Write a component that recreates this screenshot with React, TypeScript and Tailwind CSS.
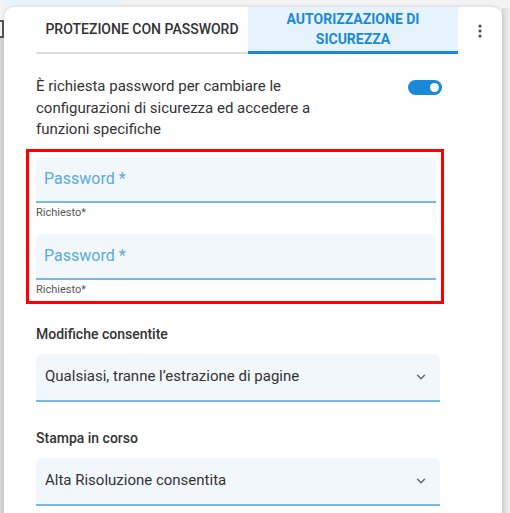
import { ChevronDown } from "lucide-react";

const font = { fontFamily: "Roboto, 'Noto Sans', sans-serif" };

function PasswordField() {
  return (
    <div>
      <div className="h-[46px] rounded-t-[6px] bg-[#f2f7fc] border-b-2 border-[#77b9e4] flex items-center px-2">
        <span className="text-[16px] text-[#5aa9df]">Password *</span>
      </div>
      <div className="text-[11px] text-[#555] leading-[14px] mt-[3px]">Richiesto*</div>
    </div>
  );
}

function SelectField({ label, value }: { label: string; value: string }) {
  return (
    <div className="w-[404px]">
      <div className="text-[14px] font-medium text-[#333] leading-[20px]">{label}</div>
      <div className="mt-[10px] h-[48px] rounded-t-[6px] bg-[#f2f7fc] border-b-2 border-[#77b9e4] flex items-center justify-between pl-[9px] pr-[12px]">
        <span className="text-[15px] text-[#333]">{value}</span>
        <ChevronDown size={14} strokeWidth={2.5} className="text-[#666]" />
      </div>
    </div>
  );
}

export default function App() {
  return (
    <div className="relative w-[510px] h-[513px] overflow-hidden bg-[#f3f3f3]" style={font}>
      {/* page behind */}
      <div className="absolute left-0 top-[-8px] w-[125px] h-[13px] rounded-b-lg bg-[#e8f3fc]" />
      <div className="absolute left-0 top-[20px] w-[4px] h-[18px] border-2 border-l-0 border-[#555]" />
      <div className="absolute left-0 top-[38px] w-[4px] h-[475px] bg-[#d6d6d6]" />
      <div className="absolute right-0 top-[8px] w-[8px] h-[505px] bg-gradient-to-r from-[#d8d8d8] to-[#f0f0f0]" />

      {/* dialog */}
      <div className="absolute left-[4px] top-[7px] w-[498px] h-[520px] bg-white rounded-t-[10px] shadow-[0_0_4px_rgba(0,0,0,0.15)]">
        <div className="flex items-stretch pl-[32px] h-[47px]">
          <div className="w-[212px] flex items-center justify-center border-b-2 border-[#ddd]">
            <span className="text-[14px] font-medium text-[#333] uppercase">Protezione con password</span>
          </div>
          <div className="w-[210px] bg-[#e6f3fd] border-b-[3px] border-[#1a8ad8] flex items-center justify-center text-center">
            <span className="text-[14px] font-bold text-[#1a8ad8] uppercase leading-[20px]">
              Autorizzazione di
              <br />
              sicurezza
            </span>
          </div>
          <div className="flex-1 flex items-center justify-center">
            <svg width="4" height="14" viewBox="0 0 4 14">
              <circle cx="2" cy="2" r="1.5" fill="#444" />
              <circle cx="2" cy="7" r="1.5" fill="#444" />
              <circle cx="2" cy="12" r="1.5" fill="#444" />
            </svg>
          </div>
        </div>

        <div className="pl-[32px] pt-[22px]">
          <div className="flex items-start w-[406px] justify-between">
            <p className="text-[15px] text-[#333] leading-[21.5px] w-[310px]">
              È richiesta password per cambiare le configurazioni di sicurezza ed accedere a funzioni specifiche
            </p>
            <div className="mt-[4px] w-[34px] h-[15px] rounded-full bg-[#1a8ad8] flex items-center justify-end pr-[3px]">
              <div className="w-[9px] h-[9px] rounded-full bg-white" />
            </div>
          </div>

          <div className="ml-[-10px] mt-[8px] w-[418px] border-[3px] border-[#ff0000] pt-[5px] pb-[4px] pl-[7px] pr-[5px] flex flex-col gap-[14px]">
            <PasswordField />
            <PasswordField />
          </div>

          <div className="mt-[20px] flex flex-col gap-[26px]">
            <SelectField label="Modifiche consentite" value="Qualsiasi, tranne l’estrazione di pagine" />
            <SelectField label="Stampa in corso" value="Alta Risoluzione consentita" />
          </div>
        </div>
      </div>
    </div>
  );
}
